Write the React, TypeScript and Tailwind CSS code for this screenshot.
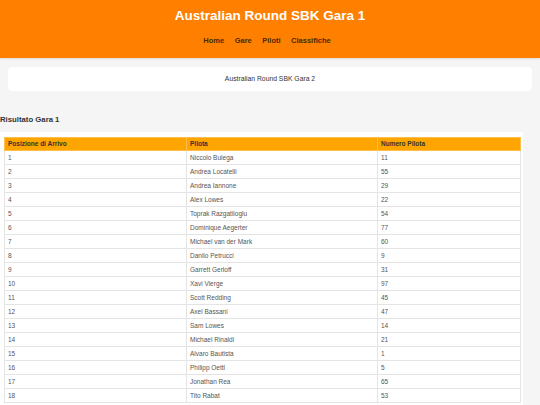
const risultati = [
  { pos: 1, pilota: 'Niccolo Bulega', numero: 11 },
  { pos: 2, pilota: 'Andrea Locatelli', numero: 55 },
  { pos: 3, pilota: 'Andrea Iannone', numero: 29 },
  { pos: 4, pilota: 'Alex Lowes', numero: 22 },
  { pos: 5, pilota: 'Toprak Razgatlioglu', numero: 54 },
  { pos: 6, pilota: 'Dominique Aegerter', numero: 77 },
  { pos: 7, pilota: 'Michael van der Mark', numero: 60 },
  { pos: 8, pilota: 'Danilo Petrucci', numero: 9 },
  { pos: 9, pilota: 'Garrett Gerloff', numero: 31 },
  { pos: 10, pilota: 'Xavi Vierge', numero: 97 },
  { pos: 11, pilota: 'Scott Redding', numero: 45 },
  { pos: 12, pilota: 'Axel Bassani', numero: 47 },
  { pos: 13, pilota: 'Sam Lowes', numero: 14 },
  { pos: 14, pilota: 'Michael Rinaldi', numero: 21 },
  { pos: 15, pilota: 'Alvaro Bautista', numero: 1 },
  { pos: 16, pilota: 'Philipp Oettl', numero: 5 },
  { pos: 17, pilota: 'Jonathan Rea', numero: 65 },
  { pos: 18, pilota: 'Tito Rabat', numero: 53 },
];

export default function App() {
  return (
    <div className="min-h-screen bg-[#f5f5f5] font-['Liberation_Sans',Arial,sans-serif] text-[#333]">
      {/* Header */}
      <header className="h-[58px] bg-[#ff8000] shadow-[0_1px_2px_rgba(0,0,0,0.1)]">
        <h1 className="pt-[7px] text-center text-[13.5px] font-bold leading-[18px] text-white">
          Australian Round SBK Gara 1
        </h1>
        <nav className="mt-[11px] flex justify-center gap-[10.5px] pr-[6px] text-[7.5px] font-bold leading-[10px] text-[#4a2a00]">
          <a href="#">Home</a>
          <a href="#">Gare</a>
          <a href="#">Piloti</a>
          <a href="#">Classifiche</a>
        </nav>
      </header>

      {/* Altre gare */}
      <div className="mx-[8px] mt-[9px] flex h-[24px] items-center justify-center rounded-[4px] bg-white text-[6.8px]">
        Australian Round SBK Gara 2
      </div>

      {/* Risultati */}
      <h2 className="mt-[24px] text-[7.75px] font-bold leading-[10px]">Risultato Gara 1</h2>
      <div className="mt-[7px] w-[523px] bg-white px-[4px] pt-[5px] pb-[6px]">
        <table className="w-[516px] table-fixed border-collapse text-[6.5px]">
          <colgroup>
            <col className="w-[182px]" />
            <col className="w-[191px]" />
            <col className="w-[143px]" />
          </colgroup>
          <thead>
            <tr className="h-[13px] bg-[#ffa500] text-left font-bold">
              <th className="border border-[#ffbf4d] px-[3px]">Posizione di Arrivo</th>
              <th className="border border-[#ffbf4d] px-[3px]">Pilota</th>
              <th className="border border-[#ffbf4d] px-[3px]">Numero Pilota</th>
            </tr>
          </thead>
          <tbody className="text-[#555]">
            {risultati.map((r) => (
              <tr key={r.pos} className="h-[14px]">
                <td className="border border-[#e4e4e4] px-[3px]">{r.pos}</td>
                <td className="border border-[#e4e4e4] px-[3px]">{r.pilota}</td>
                <td className="border border-[#e4e4e4] px-[3px]">{r.numero}</td>
              </tr>
            ))}
          </tbody>
        </table>
      </div>
    </div>
  );
}
